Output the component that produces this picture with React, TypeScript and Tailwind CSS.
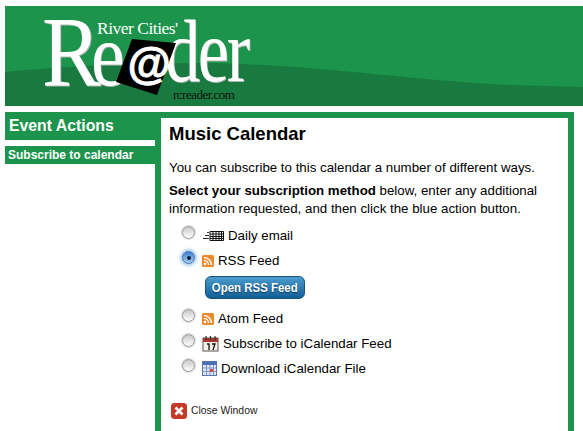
const sans = "font-['Liberation_Sans',Arial,sans-serif]";
const logoLetter = "absolute font-['Liberation_Serif',serif] text-white leading-none origin-top-left [text-shadow:1px_1px_0_#a9b5ae]";

function Rss() {
  return (
    <svg width="12" height="12" viewBox="0 0 12 12" className="shrink-0 ml-[7px]">
      <rect width="12" height="12" rx="1.5" fill="#ee8a2c" />
      <circle cx="3" cy="9" r="1.3" fill="#fff" />
      <path d="M2 5.4a4.6 4.6 0 0 1 4.6 4.6M2 2.6A7.4 7.4 0 0 1 9.4 10" fill="none" stroke="#fff" strokeWidth="1.4" />
    </svg>
  );
}

function Radio({ on = false }: { on?: boolean }) {
  return on ? (
    <span className="w-[13px] h-[13px] mb-[6px] rounded-full bg-gradient-to-b from-[#3f7fd0] to-[#a8d0f5] border border-[#3a6ea8] shadow-[0_0_3px_2px_#a9cdf0] flex items-center justify-center shrink-0">
      <span className="w-[4px] h-[4px] rounded-full bg-[#0a1a30]" />
    </span>
  ) : (
    <span className="w-[13px] h-[13px] mb-[6px] rounded-full bg-gradient-to-b from-[#c8c8c8] to-white border border-[#9a9a9a] shadow-[0_0_1px_1px_#ddd] shrink-0" />
  );
}

function Row({ on, icon, label }: { on?: boolean; icon: React.ReactNode; label: string }) {
  return (
    <div className="flex items-center h-[25px]">
      <Radio on={on} />
      {icon}
      <span className="text-[13.3px] leading-[16px] text-black ml-[4px]">{label}</span>
    </div>
  );
}

export default function App() {
  return (
    <div className={"w-[583px] h-[431px] overflow-hidden bg-white pt-[6px] " + sans}>
      <header className="relative ml-[5px] h-[100px] bg-[#1c944b] overflow-hidden">
        <svg className="absolute inset-0" width="578" height="100" viewBox="0 0 578 100">
          <path d="M0 66C60 60 130 57 200 57C290 58 380 70 445 75C490 79 530 80 578 81V100H0Z" fill="#187a3e" />
        </svg>
        <span className={logoLetter + " left-[37px] top-[-4px] text-[100px] scale-x-[.88]"}>R</span>
        <span className={logoLetter + " left-[86px] top-[5px] text-[89px] scale-x-[.85]"}>e</span>
        <span className={logoLetter + " left-[160px] top-[2px] text-[88px] tracking-[-3px] scale-x-[.8]"}>der</span>
        <span className="absolute left-[92px] top-[14px] font-['Liberation_Serif',serif] text-[17.5px] leading-none tracking-[-0.5px] text-white">River Cities'</span>
        <svg className="absolute left-[110px] top-[32px]" width="62" height="58" viewBox="0 0 62 58">
          <path d="M17 1L61 5L42 57L1 44Z" fill="#000" />
        </svg>
        <span className="absolute left-[122px] top-[36px] font-['Liberation_Sans',sans-serif] font-bold italic text-[44px] leading-none text-white [-webkit-text-stroke:1px_#fff]">@</span>
        <span className="absolute left-[168px] top-[82px] font-['Liberation_Serif',serif] text-[13px] leading-none tracking-[-0.5px] text-[#111]">rcreader.com</span>
      </header>

      <div className="mt-[6px] ml-[5px] w-[569px] h-[319px] flex">
        <aside className="w-[150px]">
          <h2 className="h-[28px] bg-[#1c944b] pl-[4px] pt-[5px] text-[15.8px] leading-[18px] font-bold text-white">Event Actions</h2>
          <div className="mt-[6px] h-[18px] bg-[#1c944b] pl-[3px] text-[12px] leading-[18px] font-bold text-white">Subscribe to calendar</div>
        </aside>
        <main className="flex-1 border-[6px] border-b-0 border-[#1c944b] bg-white pl-[8px] pr-[12px]">
          <h1 className="mt-[4px] text-[18.5px] leading-[24px] font-bold text-black">Music Calendar</h1>
          <p className="mt-[13px] text-[13.3px] leading-[18px] text-black">You can subscribe to this calendar a number of different ways.</p>
          <p className="mt-[5px] text-[13.3px] leading-[18px] text-black">
            <b>Select your subscription method</b> below, enter any additional information requested, and then click the blue action button.
          </p>
          <div className="mt-[5px] ml-[13px]">
            <Row
              label="Daily email"
              icon={
                <svg width="22" height="10" viewBox="0 0 22 10" className="ml-[7px] shrink-0">
                  <path d="M5 1.500h2M3 4.500h4M1 7.500h6" stroke="#333" fill="none" />
                  <path d="M8 0.500h13.500v9H8zM8 3h13.500M8 5.500h13.500M8 7.500h13.500M11 0v10M14 0v10M17 0v10M19.500 0v10" stroke="#111" strokeWidth="1" fill="#fff" />
                </svg>
              }
            />
            <Row on label="RSS Feed" icon={<Rss />} />
            <button className="block ml-[23px] mt-[3px] mb-[7px] w-[100px] h-[23px] rounded-[6px] border border-[#16537f] bg-gradient-to-b from-[#4a9ccd] to-[#125f96] text-[13px] leading-[20px] font-bold text-white [text-shadow:0_1px_1px_#0a3a5c]">
              <span className="inline-block scale-x-[.88] whitespace-nowrap">Open RSS Feed</span>
            </button>
            <Row label="Atom Feed" icon={<Rss />} />
            <Row
              label="Subscribe to iCalendar Feed"
              icon={
                <svg width="17" height="16" viewBox="0 0 17 16" className="ml-[7px] shrink-0">
                  <rect x="1" y="2" width="15" height="13" fill="#f4f1e8" stroke="#555" />
                  <rect x="1" y="2" width="15" height="4" fill="#a8372e" />
                  <path d="M4 0v4M8.500 0v4M13 0v4" stroke="#333" strokeWidth="1.200" />
                  <path d="M5 8h2v6M10 8h3l-2 6" stroke="#111" strokeWidth="1.300" fill="none" />
                </svg>
              }
            />
            <Row
              label="Download iCalendar File"
              icon={
                <svg width="15" height="15" viewBox="0 0 15 15" className="ml-[7px] shrink-0">
                  <rect x="0.500" y="0.500" width="14" height="14" fill="#dfe8f7" stroke="#5a76b0" />
                  <rect x="1" y="1" width="13" height="3" fill="#4d6fb8" />
                  <path d="M1 7h13M1 10.500h13M4.500 4v10M8 4v10M11.500 4v10" stroke="#7f96c8" />
                  <rect x="8" y="8" width="3" height="3" fill="#e0483a" />
                </svg>
              }
            />
          </div>
          <div className="flex items-center mt-[22px] ml-[2px]">
            <svg width="16" height="16" viewBox="0 0 16 16" className="shrink-0">
              <rect width="16" height="16" rx="3.500" fill="#c53a26" />
              <path d="M4.500 4.500l7 7M11.500 4.500l-7 7" stroke="#fff" strokeWidth="2.600" />
            </svg>
            <span className="ml-[4px] text-[10.4px] leading-[14px] text-[#222]">Close Window</span>
          </div>
        </main>
      </div>
    </div>
  );
}
